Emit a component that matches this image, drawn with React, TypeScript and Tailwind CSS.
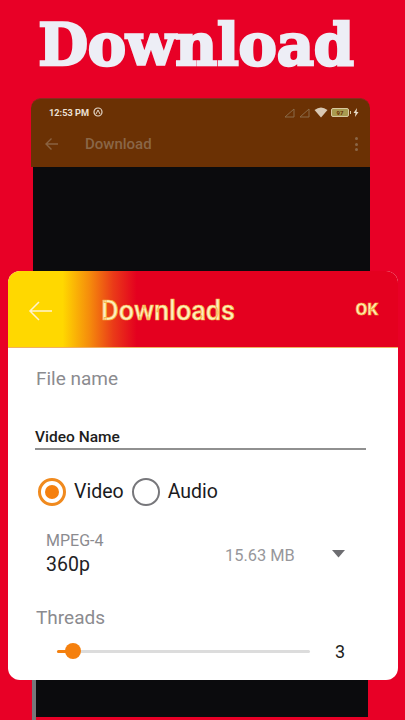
import React from "react";

const roboto = { fontFamily: "Roboto, sans-serif" };

function SignalIcon({ x = 0 }: { x?: number }) {
  return (
    <svg width="12" height="10" viewBox="0 0 12 10" style={{ marginLeft: x }}>
      <path d="M1 9 L10 1 V9 Z" fill="none" stroke="#8a6a48" strokeWidth="1" />
    </svg>
  );
}

export default function App() {
  return (
    <div className="relative w-[405px] h-[720px] overflow-hidden bg-[#e80026]" style={roboto}>
      <div className="h-[98px] pt-[11px] flex justify-center">
        <h1 className="h-[68px] text-[57.5px] leading-[68px] font-bold text-[#edeef6] tracking-[-0.2px] [-webkit-text-stroke:2.5px_#edeef6] ml-[-13px] whitespace-nowrap [font-family:'DejaVu_Serif',serif]">
          Download
        </h1>
      </div>

      <div className="ml-[31px] w-[339px] h-[622px] flex flex-col">
        <div className="h-[69px] shrink-0 bg-[#6b3104] rounded-t-[10px] border-t border-[#8a2a20] px-[18px] flex flex-col">
          <div className="h-[27px] flex items-center justify-between shrink-0">
            <div className="flex items-center gap-[4px] text-[#ece0d4] text-[9.2px] font-bold">
              <span>12:53 PM</span>
              <svg width="10" height="10" viewBox="0 0 10 10">
                <circle cx="5" cy="5" r="4" fill="none" stroke="#e3d6c8" strokeWidth="1.2" />
                <path d="M3 7 L5 3 L7 7" fill="none" stroke="#e3d6c8" strokeWidth="1" />
              </svg>
            </div>
            <div className="flex items-center mr-[-7px]">
              <SignalIcon />
              <SignalIcon x={3} />
              <svg width="14" height="11" viewBox="0 0 14 11" className="ml-[3px]">
                <path d="M0.5 3 Q7 -2 13.5 3 L7 10.5 Z" fill="#d9c8b4" />
              </svg>
              <div className="ml-[3px] w-[18px] h-[9px] border border-[#d9c8a0] rounded-[2px] bg-[#a89a50] text-[6px] leading-[7px] text-center text-[#6b3104] font-bold">
                97
              </div>
              <span className="ml-[1px] w-[1px] h-[3px] bg-[#d9c8a0]" />
              <svg width="6" height="9" viewBox="0 0 6 9" className="ml-[2px]">
                <path d="M4 0 L0.5 5 H2.5 L2 9 L5.5 4 H3.5 Z" fill="#e8dcc8" />
              </svg>
            </div>
          </div>
          <div className="h-[36px] flex items-center">
            <svg width="14" height="14" viewBox="0 0 14 14" fill="none" stroke="#8a6240" strokeWidth="1.4" className="ml-[-4px]">
              <path d="M13 7 H1.5 M6.5 1.5 L1 7 L6.5 12.5" />
            </svg>
            <span className="ml-[26px] text-[15px] font-medium text-[#8a6647]">Download</span>
            <div className="ml-auto mr-[-6px] flex flex-col gap-[2.5px]">
              <span className="w-[3px] h-[3px] rounded-full bg-[#8a6647]" />
              <span className="w-[3px] h-[3px] rounded-full bg-[#8a6647]" />
              <span className="w-[3px] h-[3px] rounded-full bg-[#8a6647]" />
            </div>
          </div>
        </div>
        <div className="h-[513px] shrink-0 ml-[2px] bg-[#0b0b0d]" />
        <div className="flex items-start">
          <div className="ml-[1px] w-[4px] h-[40px] bg-[#77777a]" />
          <div className="w-[332px] h-[37px] bg-[#0b0b0d]" />
        </div>
      </div>

      <div className="absolute left-[8px] top-[271px] w-[390px] h-[409px] bg-white rounded-[12px] overflow-hidden flex flex-col">
        <div className="h-[77px] shrink-0 flex items-center bg-[linear-gradient(90deg,#ffd800_0%,#ffd800_14%,#f58a0c_21%,#ea3a18_27%,#e4001f_33%,#e4001f_100%)] border-b border-[#f2b060]">
          <svg width="24" height="22" viewBox="0 0 24 22" fill="none" stroke="#fff3d0" strokeWidth="1.5" className="ml-[20px] mt-[3px]">
            <path d="M24 11 H2 M11 2 L2 11 L11 20" />
          </svg>
          <span className="ml-[49px] mt-[4px] text-[27px] font-medium text-[#fdf0c0] [-webkit-text-stroke:0.7px_#f6b040]">Downloads</span>
          <span className="ml-auto mr-[20px] mt-[2px] text-[17px] font-bold text-[#fff0c0] [-webkit-text-stroke:0.7px_#f6b040]">OK</span>
        </div>

        <div className="flex-1 flex flex-col">
          <div className="ml-[28px] mt-[20px] h-[22px] leading-[22px] text-[19px] text-[#8b8b8f]">File name</div>
          <div className="ml-[27px] mt-[34px] h-[26px] border-b-[2px] border-[#909090] text-[15.5px] leading-[26px] font-medium text-[#1d1d20] w-[331px]">
            Video Name
          </div>

          <div className="mt-[27px] ml-[30px] h-[30px] flex items-center text-[19.5px] text-[#1b1b1d]">
            <span className="w-[28px] h-[28px] rounded-full border-[3px] border-[#f08a1e] flex items-center justify-center">
              <span className="w-[14px] h-[14px] rounded-full bg-[#f5800e]" />
            </span>
            <span className="ml-[8px]">Video</span>
            <span className="ml-[8px] w-[28px] h-[28px] rounded-full border-[2.5px] border-[#77777b]" />
            <span className="ml-[8px]">Audio</span>
          </div>

          <div className="mt-[24px] ml-[38px] mr-[53px] h-[48px] flex items-center">
            <div className="w-[150px]">
              <div className="text-[16px] leading-[20px] text-[#8b8b8f]">MPEG-4</div>
              <div className="text-[19.5px] leading-[28px] text-[#222225]">360p</div>
            </div>
            <span className="mt-[3px] ml-[29px] text-[16.4px] text-[#97979b]">15.63 MB</span>
            <svg width="13" height="8" viewBox="0 0 13 8" className="ml-auto mt-[-2px]">
              <path d="M0 0 H13 L6.5 7.5 Z" fill="#6d6d71" />
            </svg>
          </div>

          <div className="mt-[27px] ml-[28px] h-[24px] leading-[24px] text-[19px] text-[#8b8b8f]">Threads</div>

          <div className="mt-[11px] ml-[49px] h-[20px] flex items-center">
            <div className="relative w-[253px] h-[3px] bg-[#dcdcdc] rounded-full">
              <div className="absolute left-0 top-0 h-[3px] w-[16px] bg-[#f5800e] rounded-full" />
              <div className="absolute left-[8px] top-[-7px] w-[16px] h-[16px] bg-[#f5800e] rounded-full" />
            </div>
            <span className="ml-[25px] mt-[1px] text-[18px] text-[#1d1d20]">3</span>
          </div>
        </div>
      </div>
    </div>
  );
}
